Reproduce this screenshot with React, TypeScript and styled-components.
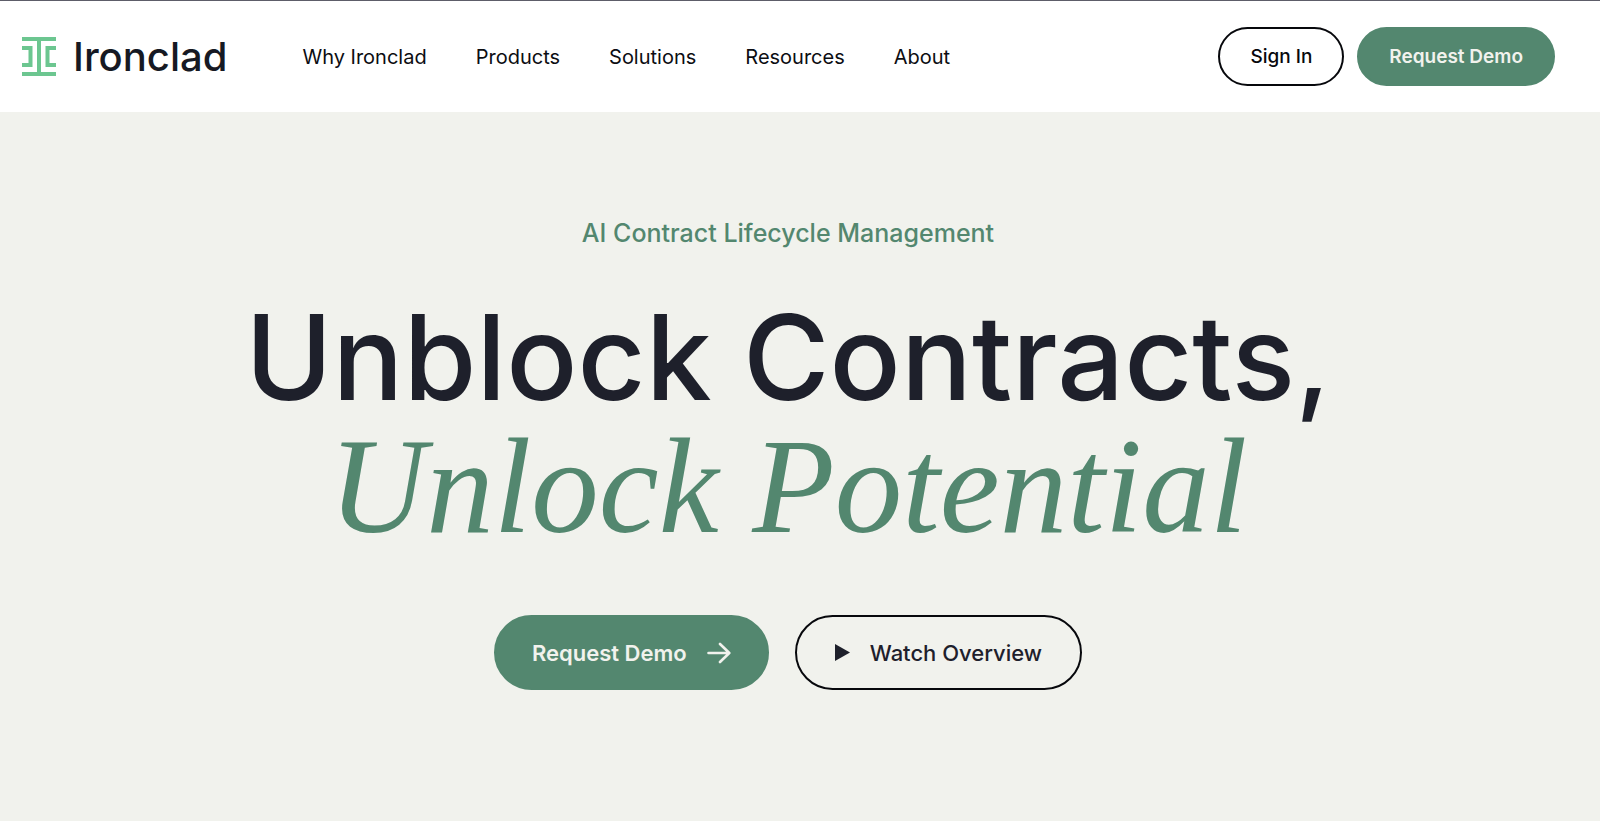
import React from "react";
import styled, { createGlobalStyle, css } from "styled-components";

const ink = "#1e202b";
const green = "#53876f";
const mist = "#f1f2ed";

const GlobalStyle = createGlobalStyle`
  *, *::before, *::after { box-sizing: border-box; }
  body {
    margin: 0;
    background: ${mist};
    color: ${ink};
    font-family: Inter, "Liberation Sans", sans-serif;
  }
`;

const Page = styled.div`
  min-height: 100vh;
  display: flex;
  flex-direction: column;
`;

const Header = styled.header`
  display: flex;
  align-items: center;
  padding: 26px 45px 26px 22px;
  background: #fff;
  border-top: 1px solid #5d5d69;
`;

const Brand = styled.a`
  display: flex;
  align-items: center;
  gap: 16px;
  color: #161923;
  font-size: 40px;
  font-weight: 500;
  line-height: 48px;
  text-decoration: none;
`;

const Nav = styled.nav`
  display: flex;
  gap: 49px;
  margin-left: 75px;
`;

const NavLink = styled.a`
  color: #0c0d12;
  font-size: 20px;
  line-height: 24px;
  text-decoration: none;
`;

const Actions = styled.div`
  display: flex;
  gap: 13px;
  margin-left: auto;
`;

const Button = styled.button<{ $solid?: boolean; $large?: boolean }>`
  display: inline-flex;
  align-items: center;
  justify-content: center;
  gap: 20px;
  border: 2px solid #07080c;
  border-radius: 999px;
  background: transparent;
  color: #07080c;
  font-family: inherit;
  font-weight: 500;
  white-space: nowrap;
  cursor: pointer;
  ${(p) =>
    p.$large
      ? css`height: 75px; padding: 0 ${p.$solid ? 36 : 38}px; color: ${ink}; font-size: 22px;`
      : css`height: 59px; padding: 0 30px; font-size: 19px;`}
  ${(p) =>
    p.$solid &&
    css`
      border-color: ${green};
      background: ${green};
      color: ${mist};
      font-weight: 600;
    `}
`;

const Hero = styled.main`
  flex: 1;
  display: flex;
  flex-direction: column;
  align-items: center;
  padding: 105px 24px 0 0;
  text-align: center;
`;

const Eyebrow = styled.p`
  margin: 0;
  color: ${green};
  font-size: 25px;
  font-weight: 500;
  line-height: 32px;
`;

const Title = styled.h1`
  margin: 44px 0 0;
  font-size: 118px;
  font-weight: 500;
  line-height: 129px;
`;

const Accent = styled.em`
  display: block;
  color: ${green};
  font-family: "Liberation Serif", serif;
  font-size: 135px;
  font-weight: 400;
`;

const HeroActions = styled.div`
  display: flex;
  gap: 26px;
  margin-top: 64px;
`;

const LogoMark = () => (
  <svg width="35" height="39" viewBox="0 0 35 39" fill="#6cc690" aria-hidden="true">
    <path d="M0 0H34V4H19V35H34V39H0V35H15V4H0Z" />
    <path d="M0 9H10.5V30H0V26H6.5V13H0Z" />
    <path d="M34 9H23.5V30H34V26H27.5V13H34Z" />
  </svg>
);

const Arrow = () => (
  <svg width="24" height="22" viewBox="0 0 24 22" fill="none" stroke={mist} strokeWidth="2.6" strokeLinecap="round" strokeLinejoin="round" aria-hidden="true">
    <path d="M1.5 11H22M13 2L22.3 11L13 20" />
  </svg>
);

const Play = () => (
  <svg width="15" height="17" viewBox="0 0 15 17" fill={ink} aria-hidden="true">
    <path d="M0 0L15 8.5L0 17Z" />
  </svg>
);

const links = ["Why Ironclad", "Products", "Solutions", "Resources", "About"];

export default function App() {
  return (
    <Page>
      <GlobalStyle />
      <Header>
        <Brand href="#">
          <LogoMark />
          Ironclad
        </Brand>
        <Nav>
          {links.map((label) => (
            <NavLink key={label} href="#">{label}</NavLink>
          ))}
        </Nav>
        <Actions>
          <Button>Sign In</Button>
          <Button $solid>Request Demo</Button>
        </Actions>
      </Header>
      <Hero>
        <Eyebrow>AI Contract Lifecycle Management</Eyebrow>
        <Title>
          Unblock Contracts,
          <Accent>Unlock Potential</Accent>
        </Title>
        <HeroActions>
          <Button $solid $large>
            Request Demo
            <Arrow />
          </Button>
          <Button $large>
            <Play />
            Watch Overview
          </Button>
        </HeroActions>
      </Hero>
    </Page>
  );
}
